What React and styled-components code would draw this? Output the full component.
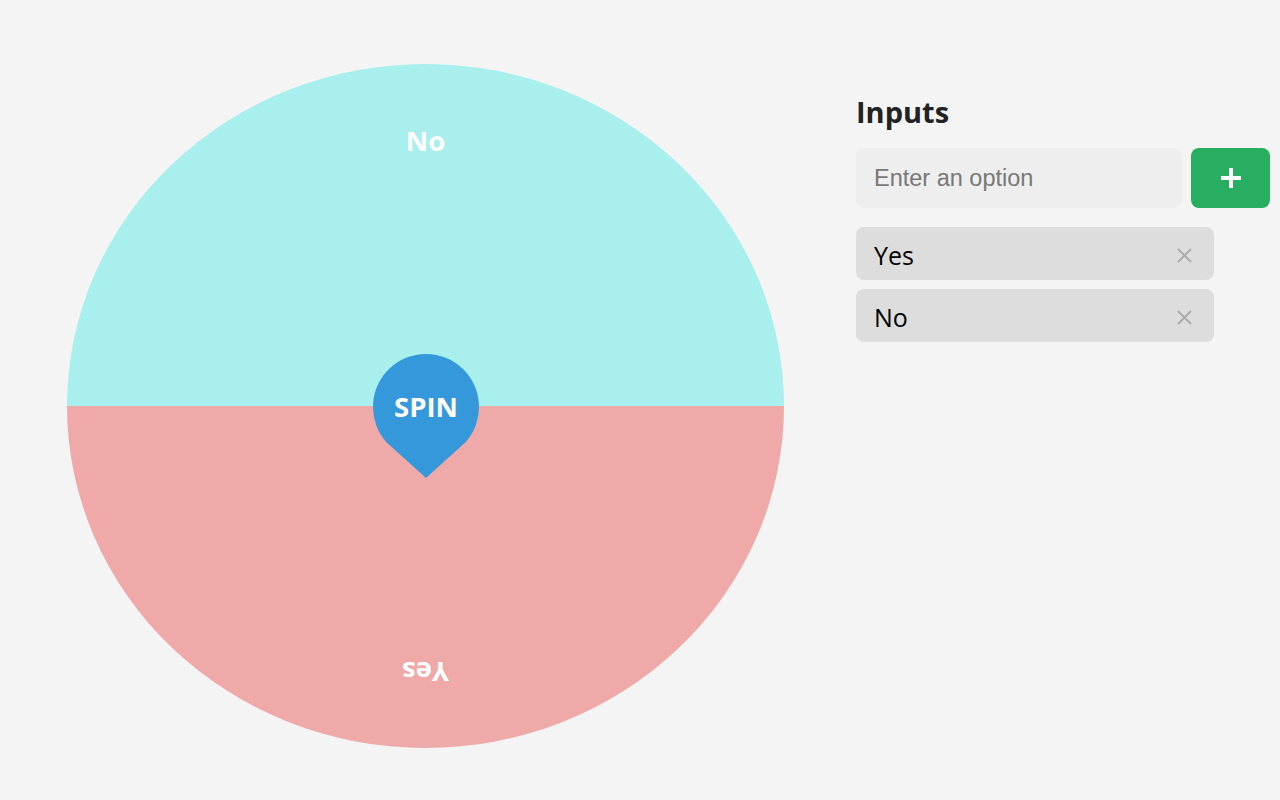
import React, { useState } from 'react';
import styled, { createGlobalStyle } from 'styled-components';

const GlobalStyle = createGlobalStyle`
  html, body {
    margin: 0;
    padding: 0;
    background: #f4f4f4;
    font-family: "Open Sans", "Liberation Sans", sans-serif;
  }
`

const Page = styled.div`
  display: flex;
  align-items: flex-start;
  gap: 72px;
  padding: 64px 0 0 67px;
  height: 800px;
  box-sizing: border-box;
`

const WheelBox = styled.div`
  position: relative;
  width: 717px;
  height: 684px;
  flex-shrink: 0;
`

const WheelSvg = styled.svg`
  display: block;
  width: 100%;
  height: 100%;
`

const SpinButton = styled.button`
  position: absolute;
  left: 304px;
  top: 289px;
  width: 110px;
  height: 130px;
  padding: 0;
  border: none;
  background: none;
  cursor: pointer;
`

const SpinLabel = styled.span`
  position: absolute;
  left: 0;
  right: 0;
  top: 36px;
  text-align: center;
  color: #fff;
  font-family: "Open Sans", sans-serif;
  font-weight: 700;
  font-size: 27.5px;
  line-height: 36px;
`

const Panel = styled.div`
  display: flex;
  flex-direction: column;
  width: 414px;
  margin-top: 31px;
`

const Heading = styled.h2`
  margin: 0 0 19px;
  font-size: 29px;
  line-height: 34px;
  font-weight: 700;
  color: #222;
`

const InputRow = styled.div`
  display: flex;
  gap: 9px;
  margin-bottom: 19px;
`

const OptionInput = styled.input`
  flex: 1;
  min-width: 0;
  height: 60px;
  box-sizing: border-box;
  border: none;
  outline: none;
  border-radius: 8px;
  background: #eeeeee;
  padding: 0 18px;
  font-family: "Liberation Sans", Arial, sans-serif;
  font-size: 23.5px;
  color: #333;
  &::placeholder {
    color: #777;
  }
`

const AddButton = styled.button`
  width: 79px;
  height: 60px;
  border: none;
  border-radius: 8px;
  background: #27ae60;
  display: flex;
  align-items: center;
  justify-content: center;
  cursor: pointer;
`

const List = styled.div`
  display: flex;
  flex-direction: column;
  gap: 9px;
  width: 358px;
`

const Item = styled.div`
  display: flex;
  align-items: center;
  justify-content: space-between;
  height: 53px;
  padding: 3px 22px 0 18px;
  box-sizing: border-box;
  border-radius: 8px;
  background: #dddddd;
  font-size: 25px;
  color: #000;
`

const Remove = styled.button`
  border: none;
  background: none;
  padding: 0;
  display: flex;
  cursor: pointer;
  margin-top: 1px;
`

const W = 717, H = 684, CX = 358.5, CY = 342

function Wheel({ options }) {
  return (
    <WheelBox>
      <WheelSvg viewBox={`0 0 ${W} ${H}`} preserveAspectRatio="none">
        <path d={`M0 ${CY} A${CX} ${CY} 0 0 1 ${W} ${CY} Z`} fill="#a9efee" />
        <path d={`M0 ${CY} A${CX} ${CY} 0 0 0 ${W} ${CY} Z`} fill="#f0a9a9" />
        <text x={CX} y={76} textAnchor="middle" dominantBaseline="central"
          fill="#fff" fontFamily="Open Sans, sans-serif" fontWeight="700" fontSize="27.5">
          {options[1]}
        </text>
        <text x={CX} y={76} textAnchor="middle" dominantBaseline="central"
          transform={`rotate(180 ${CX} ${CY})`}
          fill="#fff" fontFamily="Open Sans, sans-serif" fontWeight="700" fontSize="27.5">
          {options[0]}
        </text>
      </WheelSvg>
      <SpinButton>
        <svg width="110" height="130" viewBox="0 0 110 130">
          {/* circle r=53 at (55,54), point at (55,125) */}
          <path d="M55 125 L15.5 89.3 A53 53 0 1 1 94.5 89.3 Z" fill="#3498db" />
        </svg>
        <SpinLabel>SPIN</SpinLabel>
      </SpinButton>
    </WheelBox>
  )
}

export default function App() {
  const [options, setOptions] = useState(['Yes', 'No'])
  const [value, setValue] = useState('')

  const add = () => {
    if (!value.trim()) return
    setOptions([...options, value.trim()])
    setValue('')
  }

  return (
    <>
      <GlobalStyle />
      <Page>
        <Wheel options={options} />
        <Panel>
          <Heading>Inputs</Heading>
          <InputRow>
            <OptionInput placeholder="Enter an option" value={value} onChange={e => setValue(e.target.value)} />
            <AddButton onClick={add}>
              <svg width="22" height="22" viewBox="0 0 22 22">
                <path d="M11 1v20M1 11h20" stroke="#fff" strokeWidth="4" />
              </svg>
            </AddButton>
          </InputRow>
          <List>
            {options.map((opt, i) => (
              <Item key={i}>
                {opt}
                <Remove onClick={() => setOptions(options.filter((_, j) => j !== i))}>
                  <svg width="15" height="15" viewBox="0 0 15 15">
                    <path d="M1 1l13 13M14 1L1 14" stroke="#aaa" strokeWidth="1.8" />
                  </svg>
                </Remove>
              </Item>
            ))}
          </List>
        </Panel>
      </Page>
    </>
  )
}
